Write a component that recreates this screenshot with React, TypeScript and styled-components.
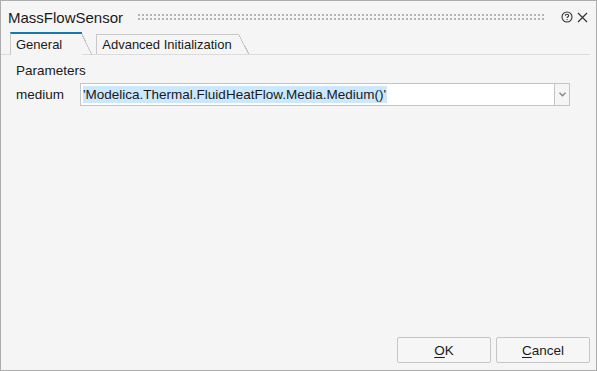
import styled, { createGlobalStyle } from "styled-components";

const GlobalStyle = createGlobalStyle`
   html, body {
      margin: 0;
      padding: 0;
      background: #ffffff;
   }
   body {
      font-family: "Liberation Sans", Arial, sans-serif;
      color: #1a1a1a;
   }
`;

export default function App() {
   return (
      <>
         <GlobalStyle />
         <Dialog>
            <TitleBar>
               <Title>MassFlowSensor</Title>
               <Grip />
               <TitleIcons>
                  <svg width="12" height="12" viewBox="0 0 12 12" fill="none">
                     <circle cx="6" cy="6" r="5" stroke="#333" strokeWidth="1.1" />
                     <path d="M4.3 4.8C4.3 3.8 5 3.3 6 3.3C7 3.3 7.7 3.9 7.7 4.7C7.7 5.7 6.1 5.8 6.1 7" stroke="#333" strokeWidth="1.1" />
                     <circle cx="6.1" cy="8.6" r="0.65" fill="#333" />
                  </svg>
                  <svg width="11" height="11" viewBox="0 0 11 11" fill="none">
                     <path d="M1 1L10 10M10 1L1 10" stroke="#333" strokeWidth="1.2" />
                  </svg>
               </TitleIcons>
            </TitleBar>

            <TabStrip>
               <Tab $active>General</Tab>
               <Tab>Advanced Initialization</Tab>
            </TabStrip>

            <Content>
               <Section>Parameters</Section>
               <ParamRow>
                  <ParamLabel>medium</ParamLabel>
                  <Combo>
                     <ComboInput>
                        <Selected>'Modelica.Thermal.FluidHeatFlow.Media.Medium()'</Selected>
                     </ComboInput>
                     <ComboButton>
                        <svg width="7" height="5" viewBox="0 0 7 5" fill="none">
                           <path d="M0.5 0.8L3.5 3.8L6.5 0.8" stroke="#888" strokeWidth="1.4" />
                        </svg>
                     </ComboButton>
                  </Combo>
               </ParamRow>
            </Content>

            <Footer>
               <Button><u>O</u>K</Button>
               <Button><u>C</u>ancel</Button>
            </Footer>
         </Dialog>
      </>
   );
}

const Dialog = styled.div`
   width: 597px;
   height: 371px;
   box-sizing: border-box;
   border: 1px solid #adadad;
   background: #f5f5f5;
   display: flex;
   flex-direction: column;
`;

const TitleBar = styled.div`
   height: 30px;
   display: flex;
   align-items: center;
   padding: 0 8px 0 7px;
   flex-shrink: 0;
`;

const Title = styled.div`
   font-size: 15px;
   color: #1a1a1a;
   margin-top: 2px;
`;

const Grip = styled.div`
   flex: 1;
   height: 6px;
   margin: 2px 15px 0 15px;
   background: repeating-linear-gradient(90deg, #b4b4b4 0 2px, transparent 2px 4px);
   -webkit-mask: repeating-linear-gradient(180deg, #000 0 2px, transparent 2px 4px);
   mask: repeating-linear-gradient(180deg, #000 0 2px, transparent 2px 4px);
`;

const TitleIcons = styled.div`
   display: flex;
   align-items: center;
   gap: 4px;
   margin-top: 2px;
`;

const TabStrip = styled.div`
   height: 23px;
   display: flex;
   align-items: flex-end;
   padding-left: 9px;
   margin-right: 6px;
   border-bottom: 1px solid #dcdcdc;
   flex-shrink: 0;
`;

const Tab = styled.div<{ $active?: boolean }>`
   position: relative;
   box-sizing: border-box;
   height: ${(p) => (p.$active ? "23px" : "20px")};
   margin-bottom: ${(p) => (p.$active ? "-1px" : "0")};
   margin-right: 14px;
   padding: ${(p) => (p.$active ? "3px 20px 0 5px" : "2px 7px 0 5px")};
   font-size: 13px;
   color: #1a1a1a;
   background: #f5f5f5;
   border-left: 1px solid #c8c8c8;
   border-top: ${(p) => (p.$active ? "2px solid #1778b0" : "1px solid #c8c8c8")};
   &::after {
      content: "";
      position: absolute;
      top: 0;
      right: -10px;
      width: 10px;
      bottom: 0;
      background: linear-gradient(
         to top right,
         transparent calc(50% - 0.7px),
         #c4c4c4 calc(50% - 0.7px),
         #c4c4c4 calc(50% + 0.4px),
         transparent calc(50% + 0.4px)
      );
   }
`;

const Content = styled.div`
   flex: 1;
   padding: 7px 26px 0 15px;
   font-size: 13.5px;
`;

const Section = styled.div`
   color: #1a1a1a;
   height: 18px;
   line-height: 18px;
`;

const ParamRow = styled.div`
   display: flex;
   align-items: center;
   margin-top: 3px;
`;

const ParamLabel = styled.div`
   width: 64px;
   color: #1a1a1a;
`;

const Combo = styled.div`
   flex: 1;
   display: flex;
   height: 23px;
`;

const ComboInput = styled.div`
   flex: 1;
   box-sizing: border-box;
   background: #ffffff;
   border: 1px solid #c4c4c4;
   display: flex;
   align-items: center;
   padding-left: 2px;
`;

const Selected = styled.span`
   background: #cce8ff;
   color: #1a1a1a;
   line-height: 17px;
   padding-right: 1px;
`;

const ComboButton = styled.div`
   width: 15px;
   box-sizing: border-box;
   border: 1px solid #c4c4c4;
   border-left: none;
   background: #f5f5f5;
   display: flex;
   align-items: center;
   justify-content: center;
`;

const Footer = styled.div`
   display: flex;
   justify-content: flex-end;
   gap: 5px;
   padding: 0 6px 7px 0;
`;

const Button = styled.button`
   width: 94px;
   height: 26px;
   box-sizing: border-box;
   border: 1px solid #c6c6c6;
   border-radius: 2px;
   background: #f6f6f6;
   font-family: "Liberation Sans", Arial, sans-serif;
   font-size: 13.5px;
   color: #1a1a1a;
   padding: 0;
   u {
      text-underline-offset: 2px;
   }
`;
